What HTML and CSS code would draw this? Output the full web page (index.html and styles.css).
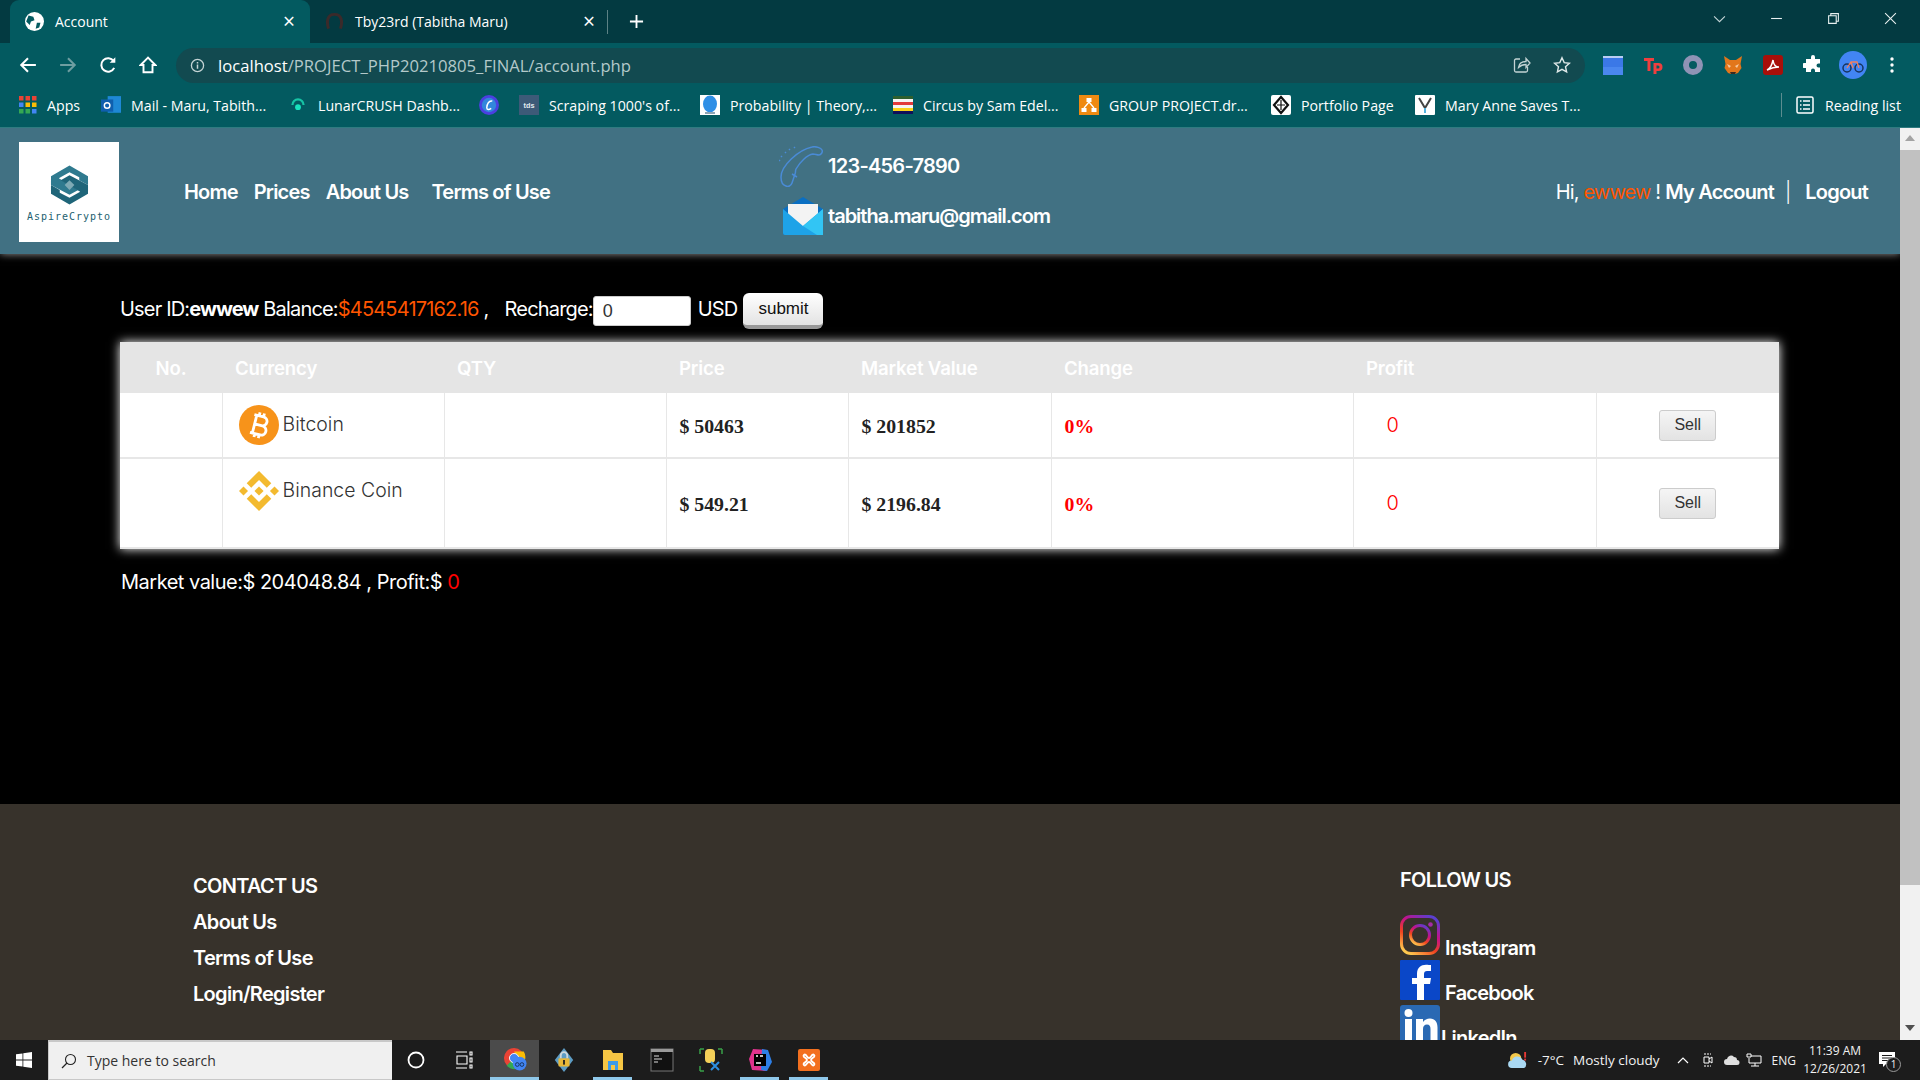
FILE: index.html
```html
<!DOCTYPE html>
<html lang="en">
<head>
<meta charset="utf-8">
<title>Account</title>
<link rel="stylesheet" href="styles.css">
</head>
<body>
<div class="browser">
  <div class="tabstrip">
    <div class="tab tab-active">
      <svg class="fav" viewBox="0 0 16 16"><circle cx="8" cy="8" r="8" fill="#fff"/><path d="M3 3l4 1 1 3-3 1-1 3-3-3zM10 9l3 0-1 4-3 1z" fill="#035a60"/></svg>
      <span class="tab-title">Account</span>
      <span class="tab-x">×</span>
    </div>
    <div class="tab">
      <svg class="fav" viewBox="0 0 16 16"><path d="M3 14C1 8 2 2 8 2s7 6 5 12" fill="none" stroke="#3b2a2a" stroke-width="2.5"/></svg>
      <span class="tab-title">Tby23rd (Tabitha Maru)</span>
      <span class="tab-x">×</span>
    </div>
    <span class="tab-sep"></span>
    <svg class="newtab" viewBox="0 0 16 16"><path d="M8 1v14M1 8h14" stroke="#fff" stroke-width="2"/></svg>
    <div class="winctl">
      <svg viewBox="0 0 12 12"><path d="M1 4l5 5 5-5" fill="none" stroke="#c5d5d7" stroke-width="1"/></svg>
      <svg viewBox="0 0 12 12"><path d="M1 6h10" stroke="#e8f0f0" stroke-width="1"/></svg>
      <svg viewBox="0 0 12 12"><path d="M1.5 3.5h7v7h-7zM3.5 3.5v-2h7v7h-2" fill="none" stroke="#e8f0f0" stroke-width="1"/></svg>
      <svg viewBox="0 0 12 12"><path d="M1 1l10 10M11 1L1 11" stroke="#e8f0f0" stroke-width="1"/></svg>
    </div>
  </div>

  <div class="toolbar">
    <div class="navbtns">
      <svg viewBox="0 0 16 16"><path d="M15 8H2M8 2L2 8l6 6" fill="none" stroke="#fff" stroke-width="1.8"/></svg>
      <svg viewBox="0 0 16 16"><path d="M1 8h13M8 2l6 6-6 6" fill="none" stroke="#6f9ea1" stroke-width="1.8"/></svg>
      <svg viewBox="0 0 16 16"><path d="M13.5 10.5A6 6 0 1 1 13 4.5" fill="none" stroke="#fff" stroke-width="1.8"/><path d="M14.5 1v5h-5z" fill="#fff"/></svg>
      <svg viewBox="0 0 16 16"><path d="M8 1.5L1.5 8H4v6.5h8V8h2.5z" fill="none" stroke="#fff" stroke-width="1.7"/></svg>
    </div>
    <div class="omnibox">
      <svg class="omni-info" viewBox="0 0 16 16"><circle cx="8" cy="8" r="6.5" fill="none" stroke="#c3d3d4" stroke-width="1.4"/><path d="M8 7v4.5M8 4.2v1.6" stroke="#c3d3d4" stroke-width="1.6"/></svg>
      <span class="url"><span class="url-host">localhost</span>/PROJECT_PHP20210805_FINAL/account.php</span>
      <svg class="omni-share" viewBox="0 0 18 18"><path d="M7 3H3a1.500 1.500 0 0 0-1.500 1.500v10A1.500 1.500 0 0 0 3 16h10a1.500 1.500 0 0 0 1.500-1.500V11" fill="none" stroke="#c3d3d4" stroke-width="1.3"/><path d="M5.500 11.500c.5-4 3.500-6 7.500-6V2.500L17 7l-4 4.500V8.500c-3 0-5.500 1-7.500 3z" fill="none" stroke="#c3d3d4" stroke-width="1.3"/></svg>
      <svg class="omni-star" viewBox="0 0 18 18"><path d="M9 1.800l2.200 4.800 5.200.6-3.900 3.500 1.100 5.200L9 13.300l-4.600 2.600 1.100-5.200L1.600 7.200l5.200-.6z" fill="none" stroke="#dfe9e9" stroke-width="1.4"/></svg>
    </div>
    <div class="extensions">
      <svg viewBox="0 0 20 20"><rect x="0" y="1" width="20" height="19" rx="1" fill="#3b78e7"/><rect x="0" y="1" width="20" height="2" fill="#b9cdf3"/><path d="M0 12l20 0v8H0z" fill="#4a87ef"/></svg>
      <svg viewBox="0 0 20 20"><path d="M1 3h10v3H7.500v10H4.500V6H1z" fill="#ef3f3f"/><path d="M10.500 8h5a4 4 0 0 1 0 8h-2v3h-3zm3 2.500v3h1.500a1.500 1.500 0 0 0 0-3z" fill="#ef3f3f"/></svg>
      <svg viewBox="0 0 20 20"><circle cx="10" cy="10" r="7" fill="none" stroke="#8f93b5" stroke-width="6"/></svg>
      <svg viewBox="0 0 20 20"><path d="M1 1l6 4h6l6-4-1.500 8 1 4-3.500 5-3 1H8l-3-1-3.500-5 1-4z" fill="#e2761b"/><path d="M7 17h6l-1 2H8z" fill="#3a2a22"/><path d="M4 9l4 2-2 2zM16 9l-4 2 2 2z" fill="#f6c9a0"/></svg>
      <svg viewBox="0 0 20 20"><rect width="20" height="20" rx="3" fill="#a80f0a"/><path d="M4 15c3-1 5-5 6-10 .5 5 3 7 6 7-4 0-8 1-12 3z" fill="none" stroke="#fff" stroke-width="1.500"/></svg>
      <svg viewBox="0 0 20 20"><path d="M8 2a2 2 0 0 1 4 0v2h5v4.500h-1.500a2 2 0 0 0 0 4H17V17h-5v-1.500a2 2 0 0 0-4 0V17H3v-4H1.500a2.500 2.500 0 0 1 0-5H3V4h5z" fill="#fff"/></svg>
      <svg class="avatar" viewBox="0 0 28 28"><circle cx="14" cy="14" r="14" fill="#4285f4"/><circle cx="8" cy="17" r="4" fill="none" stroke="#17335f" stroke-width="1.500"/><circle cx="20" cy="17" r="4" fill="none" stroke="#17335f" stroke-width="1.500"/><path d="M8 17l4-6h6l2 6M12 11l2 6" fill="none" stroke="#f08060" stroke-width="1.300"/></svg>
      <svg class="dots" viewBox="0 0 4 16"><circle cx="2" cy="2" r="1.700" fill="#fff"/><circle cx="2" cy="8" r="1.700" fill="#fff"/><circle cx="2" cy="14" r="1.700" fill="#fff"/></svg>
    </div>
  </div>

  <div class="bookmarks">
    <div class="bm bm-apps"><svg viewBox="0 0 18 18"><g><rect x="0" y="0" width="4.500" height="4.500" fill="#ea4335"/><rect x="6.500" y="0" width="4.500" height="4.500" fill="#ea4335"/><rect x="13" y="0" width="4.500" height="4.500" fill="#ea4335"/><rect x="0" y="6.500" width="4.500" height="4.500" fill="#4285f4"/><rect x="6.500" y="6.500" width="4.500" height="4.500" fill="#fbbc05"/><rect x="13" y="6.500" width="4.500" height="4.500" fill="#fbbc05"/><rect x="0" y="13" width="4.500" height="4.500" fill="#34a853"/><rect x="6.500" y="13" width="4.500" height="4.500" fill="#34a853"/><rect x="13" y="13" width="4.500" height="4.500" fill="#4285f4"/></g></svg><span>Apps</span></div>
    <div class="bm bm-mail"><svg viewBox="0 0 18 18"><rect x="6" y="1" width="12" height="15" fill="#1e88d6"/><rect x="0" y="4" width="11" height="11" fill="#0f5fae"/><circle cx="5.500" cy="9.500" r="2.500" fill="none" stroke="#fff" stroke-width="1.300"/></svg><span>Mail - Maru, Tabith...</span></div>
    <div class="bm bm-lunar"><svg viewBox="0 0 18 18"><path d="M4 9a5 5 0 0 1 10 0" fill="none" stroke="#17c4a5" stroke-width="2"/><circle cx="9" cy="11" r="2.600" fill="#17e3bd"/></svg><span>LunarCRUSH Dashb...</span></div>
    <div class="bm bm-c"><svg viewBox="0 0 18 18"><circle cx="9" cy="9" r="9" fill="#4b3fe0"/><circle cx="9" cy="9" r="6.500" fill="#21b6d8" opacity=".6"/><path d="M12 5.500c-3-1-5 3-5 6 0 2 2 2 4 .5" fill="none" stroke="#fff" stroke-width="1.300"/></svg></div>
    <div class="bm bm-tds"><svg viewBox="0 0 18 18"><rect width="18" height="18" fill="#3d5a78"/><text class="tds-mark" x="9" y="11.500" text-anchor="middle">tds</text></svg><span>Scraping 1000's of...</span></div>
    <div class="bm bm-prob"><svg viewBox="0 0 20 20"><rect width="20" height="20" fill="#fff"/><ellipse cx="10" cy="9" rx="7" ry="8.500" fill="#2f8fe6"/><rect x="5" y="17" width="10" height="2" fill="#8fa5b5"/></svg><span>Probability | Theory,...</span></div>
    <div class="bm bm-circus"><svg viewBox="0 0 20 20"><rect width="20" height="3" y="1" fill="#2e5f2e"/><rect width="20" height="3" y="4" fill="#f4f4f4"/><rect width="20" height="3" y="7" fill="#e23b3b"/><rect width="20" height="3" y="10" fill="#f4f4f4"/><rect width="20" height="3" y="13" fill="#f8d21a"/><rect width="20" height="3" y="16" fill="#10105a"/></svg><span>Circus by Sam Edel...</span></div>
    <div class="bm bm-group"><svg viewBox="0 0 20 20"><rect width="20" height="20" fill="#ef8a12"/><rect x="7.500" y="3" width="5" height="4" fill="#fff"/><rect x="2.500" y="13" width="5" height="4" fill="#fff"/><rect x="12.500" y="13" width="5" height="4" fill="#fff"/><path d="M10 7l-5 6M10 7l5 6" stroke="#fff" stroke-width="1.300"/></svg><span>GROUP PROJECT.dr...</span></div>
    <div class="bm bm-port"><svg viewBox="0 0 20 20"><rect width="20" height="20" rx="2" fill="#fff"/><path d="M10 2l7 8-7 8-7-8z" fill="none" stroke="#111" stroke-width="2.200"/><path d="M6 10h8M10 5v10" stroke="#111" stroke-width="1.200"/></svg><span>Portfolio Page</span></div>
    <div class="bm bm-mary"><svg viewBox="0 0 20 20"><rect width="20" height="20" rx="1" fill="#fff"/><path d="M4 3l6 10 6-10" fill="none" stroke="#444" stroke-width="2"/><rect x="9" y="13" width="2" height="5" fill="#54b4e0"/></svg><span>Mary Anne Saves T...</span></div>
    <div class="reading">
      <svg viewBox="0 0 18 18"><rect x="1" y="1" width="16" height="16" rx="1.500" fill="none" stroke="#fff" stroke-width="1.500"/><path d="M4 5h1.500M7 5h7M4 9h1.500M7 9h7M4 13h1.500M7 13h7" stroke="#fff" stroke-width="1.500"/></svg>
      <span>Reading list</span>
    </div>
  </div>
</div>

<div class="viewport">
  <div class="page">
    <header class="site-head">
      <div class="logo">
        <svg viewBox="0 0 40 40"><path d="M20 0l19 11v9l-9-5V12L20 7l-11 6 20 12-9 5L1 20v-9z" fill="#2f7a8f"/><path d="M20 40L1 29v-9l9 5v3l10 5 11-6L11 15l9-5 19 10v9z" fill="#1f6579"/><path d="M20 15l5 5-5 5-5-5z" fill="#7eaab5"/></svg>
        <span class="logo-name">AspireCrypto</span>
      </div>
      <nav class="main-nav">
        <a>Home</a><a>Prices</a><a>About Us</a><a class="nav-terms">Terms of Use</a>
      </nav>
      <div class="contact">
        <div class="contact-row">
          <svg class="contact-phone" viewBox="0 0 44 41"><path d="M33 1c4-1 9 1 10 3 1 2-1 5-3 5-2 0-4-1-6-1-6 1-13 8-17 15-1 2 0 3-1 5l-3 9c-1 3-4 4-6 3-4-1-5-5-5-9C2 20 19 4 33 1z" fill="none" stroke="#4a8bd6" stroke-width="1.500"/><path d="M16 1l-1 1M11 3l-1 1M7 6L6 7M3 10l-1 1M1 14l-1 1" stroke="#4a8bd6" stroke-width="1.500"/><path d="M13 28l5 3" stroke="#4a8bd6" stroke-width="1.500"/></svg>
          <span class="contact-text contact-text-phone">123-456-7890</span>
        </div>
        <div class="contact-row contact-row-mail">
          <svg class="contact-mail" viewBox="0 0 40 38"><path d="M0 12L20 0l20 12v24a2 2 0 0 1-2 2H2a2 2 0 0 1-2-2z" fill="#0a6fc2"/><rect x="5" y="7" width="30" height="22" fill="#f3f3f3"/><path d="M0 12l20 17 20-17v24a2 2 0 0 1-2 2H2a2 2 0 0 1-2-2z" fill="#1ea3e8"/><path d="M40 12v26H34L20 29z" fill="#32c5f4"/></svg>
          <span class="contact-text contact-text-mail">tabitha.maru@gmail.com</span>
        </div>
      </div>
      <div class="account-links">
        <span class="hi">Hi, <span class="orange">ewwew</span> !</span>
        <a>My Account</a>
        <span class="pipe">|</span>
        <a>Logout</a>
      </div>
    </header>

    <main class="main">
      <div class="balance-line">
        <span>User ID:</span><b class="uid">ewwew</b><span class="bal-label">Balance:</span><span class="orange">$4545417162.16</span><span class="comma">,</span><span class="recharge">Recharge:</span><input class="recharge-input" type="text" value="0"><span class="usd">USD</span><button class="submit-btn" type="button">submit</button>
      </div>

      <table class="holdings">
        <thead>
          <tr>
            <th class="col-no">No.</th><th class="col-cur">Currency</th><th class="col-qty">QTY</th><th class="col-price">Price</th><th class="col-mv">Market Value</th><th class="col-chg">Change</th><th class="col-prof">Profit</th><th class="col-act"></th>
          </tr>
        </thead>
        <tbody>
          <tr class="row-a">
            <td></td>
            <td class="cur"><span class="cur-box">
              <svg class="coin" viewBox="0 0 40 40"><circle cx="20" cy="20" r="20" fill="#f7931a"/><g transform="rotate(14 20 20)"><path d="M13 11h9.500a4.500 4.500 0 0 1 0 9H15.500h8a4.700 4.700 0 0 1 0 9.400H13M15.500 11v18.400M18 7.500v3.500M22.500 7.500v3.500M18 29.400v3.500M22.500 29.400v3.500" fill="none" stroke="#fff" stroke-width="2.800"/></g></svg>
              <span class="cur-name">Bitcoin</span></span></td>
            <td></td>
            <td class="money">$ 50463</td>
            <td class="money">$ 201852</td>
            <td class="pct">0%</td>
            <td class="prof">0</td>
            <td class="act"><button class="sell" type="button">Sell</button></td>
          </tr>
          <tr class="row-b">
            <td></td>
            <td class="cur"><span class="cur-box">
              <svg class="coin" viewBox="0 0 126.610 126.610"><g fill="#f3ba2f"><path d="M38.730 53.200l24.590-24.580 24.600 24.600 14.300-14.310L63.320 0 24.430 38.900z"/><path d="M0 63.310l14.300-14.310 14.310 14.310-14.310 14.300z"/><path d="M38.730 73.410l24.590 24.590 24.600-24.600 14.310 14.290-38.900 38.910-38.910-38.880z"/><path d="M98 63.310l14.300-14.310 14.310 14.300-14.310 14.320z"/><path d="M77.830 63.300L63.320 48.780 48.810 63.280l14.510 14.500z"/></g></svg>
              <span class="cur-name">Binance Coin</span></span></td>
            <td></td>
            <td class="money">$ 549.21</td>
            <td class="money">$ 2196.84</td>
            <td class="pct">0%</td>
            <td class="prof">0</td>
            <td class="act"><button class="sell" type="button">Sell</button></td>
          </tr>
        </tbody>
      </table>

      <p class="summary">Market value:$ 204048.84 , Profit:$ <span class="red">0</span></p>
    </main>

    <footer class="site-foot">
      <ul class="foot-links">
        <li>CONTACT US</li>
        <li>About Us</li>
        <li>Terms of Use</li>
        <li>Login/Register</li>
      </ul>
      <div class="follow">
        <div class="follow-title">FOLLOW US</div>
        <div class="social">
          <svg class="soc-icon" viewBox="0 0 40 40"><defs><linearGradient id="ig" x1="0.200" y1="1" x2="0.800" y2="0"><stop offset="0" stop-color="#fdc94f"/><stop offset=".35" stop-color="#f0431f"/><stop offset=".65" stop-color="#c4118a"/><stop offset="1" stop-color="#5b3fd0"/></linearGradient></defs><rect x="1.500" y="1.500" width="37" height="37" rx="9.500" fill="none" stroke="url(#ig)" stroke-width="3"/><circle cx="20" cy="20" r="9.500" fill="none" stroke="url(#ig)" stroke-width="3"/><circle cx="30.500" cy="9.500" r="2.300" fill="#a62ba8"/></svg>
          <span>Instagram</span>
        </div>
        <div class="social">
          <svg class="soc-icon" viewBox="0 0 40 40"><rect width="40" height="40" rx="1" fill="#0a47c8"/><path d="M24 40V24h6l1-6h-7v-4c0-2 1-3 3-3h4V5c-1 0-3-.3-5-.3-5 0-9 3-9 9V18h-5v6h5v16z" fill="#fff"/></svg>
          <span>Facebook</span>
        </div>
        <div class="social social-li">
          <svg class="soc-icon" viewBox="0 0 40 40"><rect width="40" height="40" rx="3" fill="#2a69b3"/><circle cx="8.500" cy="8" r="4" fill="#fff"/><rect x="5" y="14" width="7" height="22" fill="#fff"/><path d="M16 14h7v3c1.500-2.200 4-3.500 7-3.500 5 0 7.500 3.500 7.500 9V36h-7V24c0-3-1-4.500-3.500-4.500S23 21 23 24v12h-7z" fill="#fff"/></svg>
          <span>LinkedIn</span>
        </div>
      </div>
    </footer>
  </div>
  <aside class="scrollbar">
    <span class="scroll-up"></span>
    <span class="scroll-thumb"></span>
    <span class="scroll-down"></span>
  </aside>
</div>

<div class="taskbar">
  <svg class="win-logo" viewBox="0 0 16 16"><path d="M0 2.300l6.500-.9v6.200H0zM7.300 1.300L16 0v7.600H7.300zM0 8.400h6.500v6.200L0 13.700zM7.300 8.400H16V16l-8.700-1.300z" fill="#fff"/></svg>
  <div class="searchbox">
    <svg viewBox="0 0 16 16"><circle cx="9.500" cy="6.500" r="5" fill="none" stroke="#222" stroke-width="1.100"/><path d="M6 10l-5 5" stroke="#222" stroke-width="1.300"/></svg>
    <span>Type here to search</span>
  </div>
  <div class="taskicons">
    <span class="ti ti-tight"><svg viewBox="0 0 18 18"><circle cx="9" cy="9" r="7.500" fill="none" stroke="#fff" stroke-width="1.800"/></svg></span>
    <span class="ti ti-tight"><svg viewBox="0 0 18 18"><path d="M1 1h11M1 17h11M2 5h10v8H2z M15 1h2v3h-2zM15 7h2v4h-2zM15 14h2v3h-2z" fill="none" stroke="#fff" stroke-width="1.100"/></svg></span>
    <span class="ti ti-on"><svg class="big" viewBox="0 0 26 26"><circle cx="12" cy="12" r="11" fill="#ea4335"/><path d="M12 12L21 20A11 11 0 0 1 4 20z" fill="#34a853"/><path d="M12 5h10.500a11 11 0 0 1-3 15z" fill="#fbbc05"/><circle cx="12" cy="12" r="5" fill="#4285f4" stroke="#fff"/><circle cx="18" cy="18" r="7.500" fill="#4285f4"/><circle cx="15.500" cy="19" r="2" fill="none" stroke="#14305a"/><circle cx="20.500" cy="19" r="2" fill="none" stroke="#14305a"/></svg></span>
    <span class="ti"><svg class="big" viewBox="0 0 24 26"><path d="M12 0l10 13-10 13L2 13z" fill="#5d9cc4"/><rect x="6" y="11" width="12" height="9" rx="1" fill="#e8b838"/><path d="M8.500 11V8a3.500 3.500 0 0 1 7 0v3" fill="none" stroke="#cfd8dc" stroke-width="2"/><rect x="11" y="13" width="2" height="5" fill="#222"/></svg></span>
    <span class="ti ti-line"><svg class="big" viewBox="0 0 24 24"><path d="M2 2h8l2 3h10v17H2z" fill="#f6c644"/><rect x="7" y="13" width="10" height="9" fill="#3d9be9"/><rect x="10" y="17" width="4" height="5" fill="#f6c644"/></svg></span>
    <span class="ti"><svg class="big" viewBox="0 0 24 24"><rect x="1" y="1" width="22" height="22" fill="#111" stroke="#777"/><rect x="1" y="1" width="22" height="3" fill="#999"/><path d="M4 8h5M4 11h8M4 14h4" stroke="#ddd" stroke-width="1.200"/></svg></span>
    <span class="ti"><svg class="big" viewBox="0 0 24 24"><path d="M1 1h4M1 1v5M23 1h-4M23 1v5M1 23h4M1 23v-5" stroke="#38a048" stroke-width="1.500" fill="none"/><rect x="6" y="1" width="10" height="14" rx="4" fill="#f4cf59"/><path d="M12 14l8 8M20 14l-8 8" stroke="#2d8fe0" stroke-width="2"/></svg></span>
    <span class="ti ti-line"><svg class="big" viewBox="0 0 24 24"><path d="M5 1l14 1 4 12-5 9L4 22 1 11z" fill="#e0338d"/><path d="M14 1l6 1 4 12-5 9-6-1z" fill="#2d7fe6"/><rect x="6" y="6" width="12" height="12" fill="#000"/><path d="M8 15h5M8 8h2M12 8h3" stroke="#fff" stroke-width="1.300"/></svg></span>
    <span class="ti ti-line"><svg class="big" viewBox="0 0 24 24"><rect x="1" y="1" width="22" height="22" rx="2" fill="#f3701f"/><path d="M7 7c2-2 3 3 5 3s3-5 5-3-3 3-3 5 5 3 3 5-3-3-5-3-3 5-5 3 3-3 3-5-5-3-3-5z" fill="none" stroke="#fff" stroke-width="1.800"/></svg></span>
  </div>
  <div class="tray">
    <svg class="tray-weather" viewBox="0 0 22 18"><circle cx="8" cy="7" r="6" fill="#f3c84a"/><path d="M4 17a4 4 0 0 1 0-8 6 6 0 0 1 11-1 5 5 0 0 1 2 9z" fill="#a9d8f2"/><rect x="17" y="0" width="2" height="6" fill="#e53935"/><rect x="17" y="7" width="2" height="2" fill="#e53935"/></svg>
    <span class="tray-temp">-7°C</span>
    <span class="tray-weather-text">Mostly cloudy</span>
    <svg class="tray-chev" viewBox="0 0 12 8"><path d="M1 7l5-5 5 5" fill="none" stroke="#fff" stroke-width="1.200"/></svg>
    <svg class="tray-meet" viewBox="0 0 12 16"><path d="M2 5h5v6H2zM7 7l3-2v6l-3-2" fill="none" stroke="#fff"/><path d="M2 2h7M2 14h7" stroke="#fff" stroke-dasharray="2 1"/></svg>
    <svg class="tray-cloud" viewBox="0 0 16 10"><path d="M3 10a3 3 0 0 1 0-6 4 4 0 0 1 7-2 3 3 0 0 1 3 3 2.500 2.500 0 0 1 0 5z" fill="#dfdfdf"/></svg>
    <svg class="tray-net" viewBox="0 0 16 14"><path d="M1 1h4v3H1zM5 3h10v7H3V5M9 10v3M5 13h8" fill="none" stroke="#fff"/></svg>
    <span class="tray-lang">ENG</span>
    <div class="tray-clock"><span>11:39 AM</span><span>12/26/2021</span></div>
    <div class="tray-note">
      <svg viewBox="0 0 16 16"><path d="M0 0h16v12H7l-3 3v-3H0z" fill="#fff"/><path d="M3 3.500h10M3 6h10M3 8.500h7" stroke="#1a1a1a"/></svg>
      <span class="note-badge">1</span>
    </div>
  </div>
</div>
</body>
</html>
```

FILE: styles.css
```css
* { box-sizing: border-box; }
html, body { margin: 0; padding: 0; height: 100%; overflow: hidden; }
body { width: 1920px; height: 1080px; display: flex; flex-direction: column; font-family: "Inter", "Liberation Sans", sans-serif; background: #000; }

/* browser chrome */
.browser { flex: 0 0 128px; display: flex; flex-direction: column; font-family: "Open Sans", "Noto Sans", sans-serif; color: #fff; }
.tabstrip { height: 43px; background: #033a41; display: flex; align-items: center; padding-left: 10px; }
.tab { width: 300px; height: 43px; display: flex; align-items: center; padding: 0 0 0 15px; border-radius: 9px 9px 0 0; font-size: 14px; }
.tab-active { background: #035a60; }
.fav { width: 19px; height: 19px; flex: none; }
.tab-title { margin-left: 11px; flex: 1; }
.tab-x { font-size: 21px; line-height: 1; margin-right: 14px; width: 14px; text-align: center; }
.tab-sep { width: 1px; height: 24px; background: #5d8285; margin-left: -3px; }
.newtab { width: 15px; height: 15px; margin-left: 21px; }
.winctl { margin-left: auto; display: flex; align-self: flex-start; gap: 44px; padding: 12px 23px 0 0; }
.winctl svg { width: 13px; height: 13px; }

.toolbar { height: 41px; background: #035a60; display: flex; align-items: center; padding-top: 3px; }
.navbtns { display: flex; gap: 22px; padding-left: 19px; width: 176px; flex: none; }
.navbtns svg { width: 18px; height: 18px; flex: none; }
.omnibox { width: 1409px; height: 35px; border-radius: 18px; background: #124a50; display: flex; align-items: center; padding: 0 14px 0 14px; }
.omni-info { width: 15px; height: 15px; flex: none; }
.url { margin-left: 13px; font-size: 16.65px; color: #b4c9ca; flex: 1; }
.url-host { color: #fff; }
.omni-share { width: 18px; height: 18px; }
.omni-star { width: 18px; height: 18px; margin-left: 22px; }
.extensions { display: flex; align-items: center; gap: 20px; padding-left: 18px; }
.extensions svg { width: 20px; height: 20px; flex: none; }
.extensions .avatar { width: 28px; height: 28px; margin: 0 -4px 0 -4px; }
.extensions .dots { width: 4px; height: 16px; margin-left: 7px; }

.bookmarks { height: 44px; background: #035a60; display: flex; align-items: center; padding: 0 0 1px 19px; font-size: 14.2px; border-bottom: 1px solid #2f7b80; }
.bm { display: flex; align-items: center; flex: none; white-space: nowrap; }
.bm svg { width: 20px; height: 20px; flex: none; margin-right: 10px; }
.tds-mark { font: 700 6.5px "Liberation Sans", sans-serif; fill: #e6edf2; }
.bm-apps { width: 82px; }
.bm-apps svg { width: 18px; height: 18px; }
.bm-mail { width: 187px; }
.bm-lunar { width: 191px; }
.bm-c { width: 40px; }
.bm-tds { width: 181px; }
.bm-prob { width: 193px; }
.bm-circus { width: 186px; }
.bm-group { width: 192px; }
.bm-port { width: 144px; }
.bm-mary { width: 366px; }
.reading { display: flex; align-items: center; border-left: 1px solid #5d8d90; height: 24px; padding-left: 14px; gap: 11px; }
.reading svg { width: 18px; height: 18px; }

/* viewport */
.viewport { flex: 0 0 912px; display: flex; overflow: hidden; }
.page { width: 1900px; flex: none; overflow: hidden; display: flex; flex-direction: column; color: #fff; }

.site-head { flex: 0 0 126px; background: #417183; display: grid; grid-template-columns: 165px 595px 1fr auto; align-items: center; padding: 2px 32px 0 19px; box-shadow: 0 0 8px rgba(255, 255, 255, .6); position: relative; }
.logo { width: 100px; height: 100px; background: #fff; display: flex; flex-direction: column; align-items: center; padding-top: 23px; }
.logo svg { width: 39px; height: 40px; }
.logo-name { margin-top: 6px; font-family: "DejaVu Sans Mono", monospace; font-size: 10px; letter-spacing: 1px; color: #1d5f70; }
.main-nav { display: flex; align-items: center; gap: 16px; font-size: 20px; font-weight: 600; letter-spacing: -0.8px; }
.nav-about { margin-left: 1px; }
.nav-terms { margin-left: 7px; }
.contact { display: flex; flex-direction: column; margin-top: -2px; }
.contact-row { display: flex; align-items: center; height: 41px; }
.contact-row-mail { height: 40px; margin-top: 9px; padding-left: 4px; }
.contact-phone { width: 44px; height: 41px; flex: none; }
.contact-mail { width: 40px; height: 38px; flex: none; }
.contact-text { margin-left: 5px; font-size: 20px; font-weight: 600; letter-spacing: -0.75px; }
.contact-text-phone { margin-top: -1px; }
.contact-text-mail { letter-spacing: -1px; }
.account-links { display: flex; align-items: center; font-size: 20px; letter-spacing: -0.85px; white-space: nowrap; }
.account-links a { font-weight: 600; letter-spacing: -0.8px; }
.hi { margin-right: 5px; }
.pipe { margin: 0 15px 0 11px; font-weight: 300; }
.orange { color: #ff5500; }
.red { color: #f00; }

.main { flex: 0 0 550px; background: #000; padding: 39px 120px 0; }
.balance-line { display: flex; align-items: center; height: 36px; font-size: 20px; letter-spacing: -0.82px; white-space: nowrap; }
.balance-line span, .balance-line b { padding-bottom: 5px; }
.uid { font-weight: 700; letter-spacing: -1px; }
.bal-label { margin-left: 5px; }
.comma { margin-left: 5px; }
.recharge { margin-left: 16px; }
.recharge-input { width: 98px; height: 30px; border: 1px solid #ccc; border-radius: 3px; padding: 0 9px; font: 18px "Liberation Sans", sans-serif; color: #333; background: #fff; letter-spacing: 0; }
.usd { margin-left: 7px; }
.submit-btn { margin-left: 6px; width: 80px; height: 36px; border: 0; border-radius: 6px; background: linear-gradient(#fff, #e3e3e3); border-bottom: 4px solid #999; font: 17px "Liberation Sans", sans-serif; letter-spacing: 0; color: #111; padding: 0; }

.holdings { margin-top: 13px; width: 1659px; table-layout: fixed; border-collapse: collapse; background: #fff; box-shadow: 0 0 10px #fff; }
.holdings th { height: 51px; background: #e5e5e5; color: #fff; font-size: 18.6px; font-weight: 600; letter-spacing: -0.15px; text-align: left; padding: 0 0 0 13px; }
.col-no { width: 102px; }
th.col-no { text-align: center; padding: 0; }
.col-cur { width: 222px; }
.col-qty { width: 222px; }
.col-price { width: 182px; }
.col-mv { width: 203px; }
.col-chg { width: 302px; }
.col-prof { width: 243px; }
.col-act { width: 183px; }
.holdings td { border-left: 1px solid #e7e7e7; border-bottom: 2px solid #e7e7e7; padding: 2px 0 0 13px; vertical-align: middle; color: #222; }
.holdings td:first-child { border-left: 0; }
.row-a td { height: 65px; }
.row-b td { height: 90px; }
.holdings td.cur { vertical-align: top; padding: 12px 0 0 16px; }
.cur-box { display: flex; align-items: center; gap: 4px; }
.coin { width: 40px; height: 40px; flex: none; }
.cur-name { font-size: 19.4px; font-weight: 300; color: #333; margin-top: -3px; letter-spacing: 0.05px; }
.holdings td.money { font: 700 19.8px "Liberation Serif", serif; color: #222; }
.holdings td.pct { font: 700 19.8px "Liberation Serif", serif; color: #f00; }
.holdings td.prof { color: #f00; font-size: 20px; font-weight: 300; padding: 0 0 0 33px; }
.holdings td.act { text-align: center; padding: 0; }
.sell { width: 57px; height: 31px; border: 1px solid #ccc; border-radius: 3px; background: linear-gradient(#f5f5f5, #e3e3e3); font: 16px "Liberation Sans", sans-serif; color: #333; padding: 0; }
.summary { margin: 19px 0 0 1px; font-size: 20px; letter-spacing: -0.5px; line-height: 28px; }

.site-foot { flex: 1; background: #37322b; display: flex; padding: 0 0 0 193px; overflow: hidden; }
.foot-links { list-style: none; margin: 64px 0 0; padding: 0; width: 1207px; font-size: 20px; font-weight: 600; letter-spacing: -0.7px; }
.foot-links li { height: 36px; line-height: 36px; }
.follow { padding-top: 63px; font-size: 20px; font-weight: 600; letter-spacing: -0.75px; }
.follow-title { height: 26px; line-height: 26px; margin-bottom: 22px; }
.social { display: flex; align-items: flex-end; height: 40px; margin-bottom: 5px; gap: 5px; }
.social span { line-height: 20px; margin-bottom: -3px; }
.social-li { gap: 1px; }
.soc-icon { width: 40px; height: 40px; flex: none; }

.scrollbar { flex: 0 0 20px; background: #f1f1f1; display: flex; flex-direction: column; align-items: center; }
.scroll-up { width: 0; height: 0; border: 5px solid transparent; border-top: 0; border-bottom: 6px solid #a3a3a3; margin-top: 7px; }
.scroll-thumb { width: 20px; height: 735px; margin-top: 9px; background: #c1c1c1; }
.scroll-down { width: 0; height: 0; border: 5px solid transparent; border-bottom: 0; border-top: 6px solid #505050; margin-top: 140px; }

/* taskbar */
.taskbar { flex: 0 0 40px; background: #1c1c1c; display: flex; align-items: center; color: #fff; font-family: "Open Sans", "Noto Sans", sans-serif; }
.win-logo { width: 16px; height: 16px; margin: 0 16px; flex: none; }
.searchbox { width: 344px; height: 40px; background: #f0f0f0; border: 1px solid #c8c8c8; border-top-width: 2px; border-right: 0; color: #333; display: flex; align-items: center; font-size: 14px; padding-left: 12px; gap: 10px; flex: none; }
.searchbox svg { width: 16px; height: 16px; }
.taskicons { display: flex; }
.ti { width: 49px; height: 40px; display: flex; align-items: center; justify-content: center; position: relative; flex: none; }
.ti-tight { width: 48px; }
.ti-tight + .ti-on { margin-left: 2px; }
.ti svg { width: 18px; height: 18px; }
.ti svg.big { width: 24px; height: 24px; }
.ti-on { background: #4b4b4b; border-bottom: 3px solid #8fc8ea; }
.ti-line::after { content: ""; position: absolute; left: 5px; right: 5px; bottom: 0; height: 3px; background: #8fc8ea; }
.tray { margin-left: auto; display: flex; align-items: center; font-size: 13.5px; color: #f2f2f2; padding-right: 25px; }
.tray-weather { width: 21px; height: 17px; }
.tray-temp { margin-left: 9px; }
.tray-weather-text { margin-left: 9px; }
.tray-chev { width: 12px; height: 8px; margin-left: 17px; }
.tray-meet { width: 12px; height: 16px; margin-left: 13px; }
.tray-cloud { width: 16px; height: 10px; margin-left: 10px; }
.tray-net { width: 16px; height: 14px; margin-left: 6px; }
.tray-lang { margin-left: 10px; font-size: 12px; }
.tray-clock { margin-left: 11px; width: 56px; display: flex; flex-direction: column; align-items: center; font-size: 12px; line-height: 18px; white-space: nowrap; }
.tray-note { margin-left: 16px; position: relative; width: 16px; height: 16px; }
.tray-note svg { width: 16px; height: 16px; display: block; }
.note-badge { position: absolute; left: 7px; top: 5px; width: 15px; height: 15px; border: 1px solid #9a9a9a; border-radius: 50%; background: #1c1c1c; font-size: 10px; line-height: 13px; text-align: center; }
```
